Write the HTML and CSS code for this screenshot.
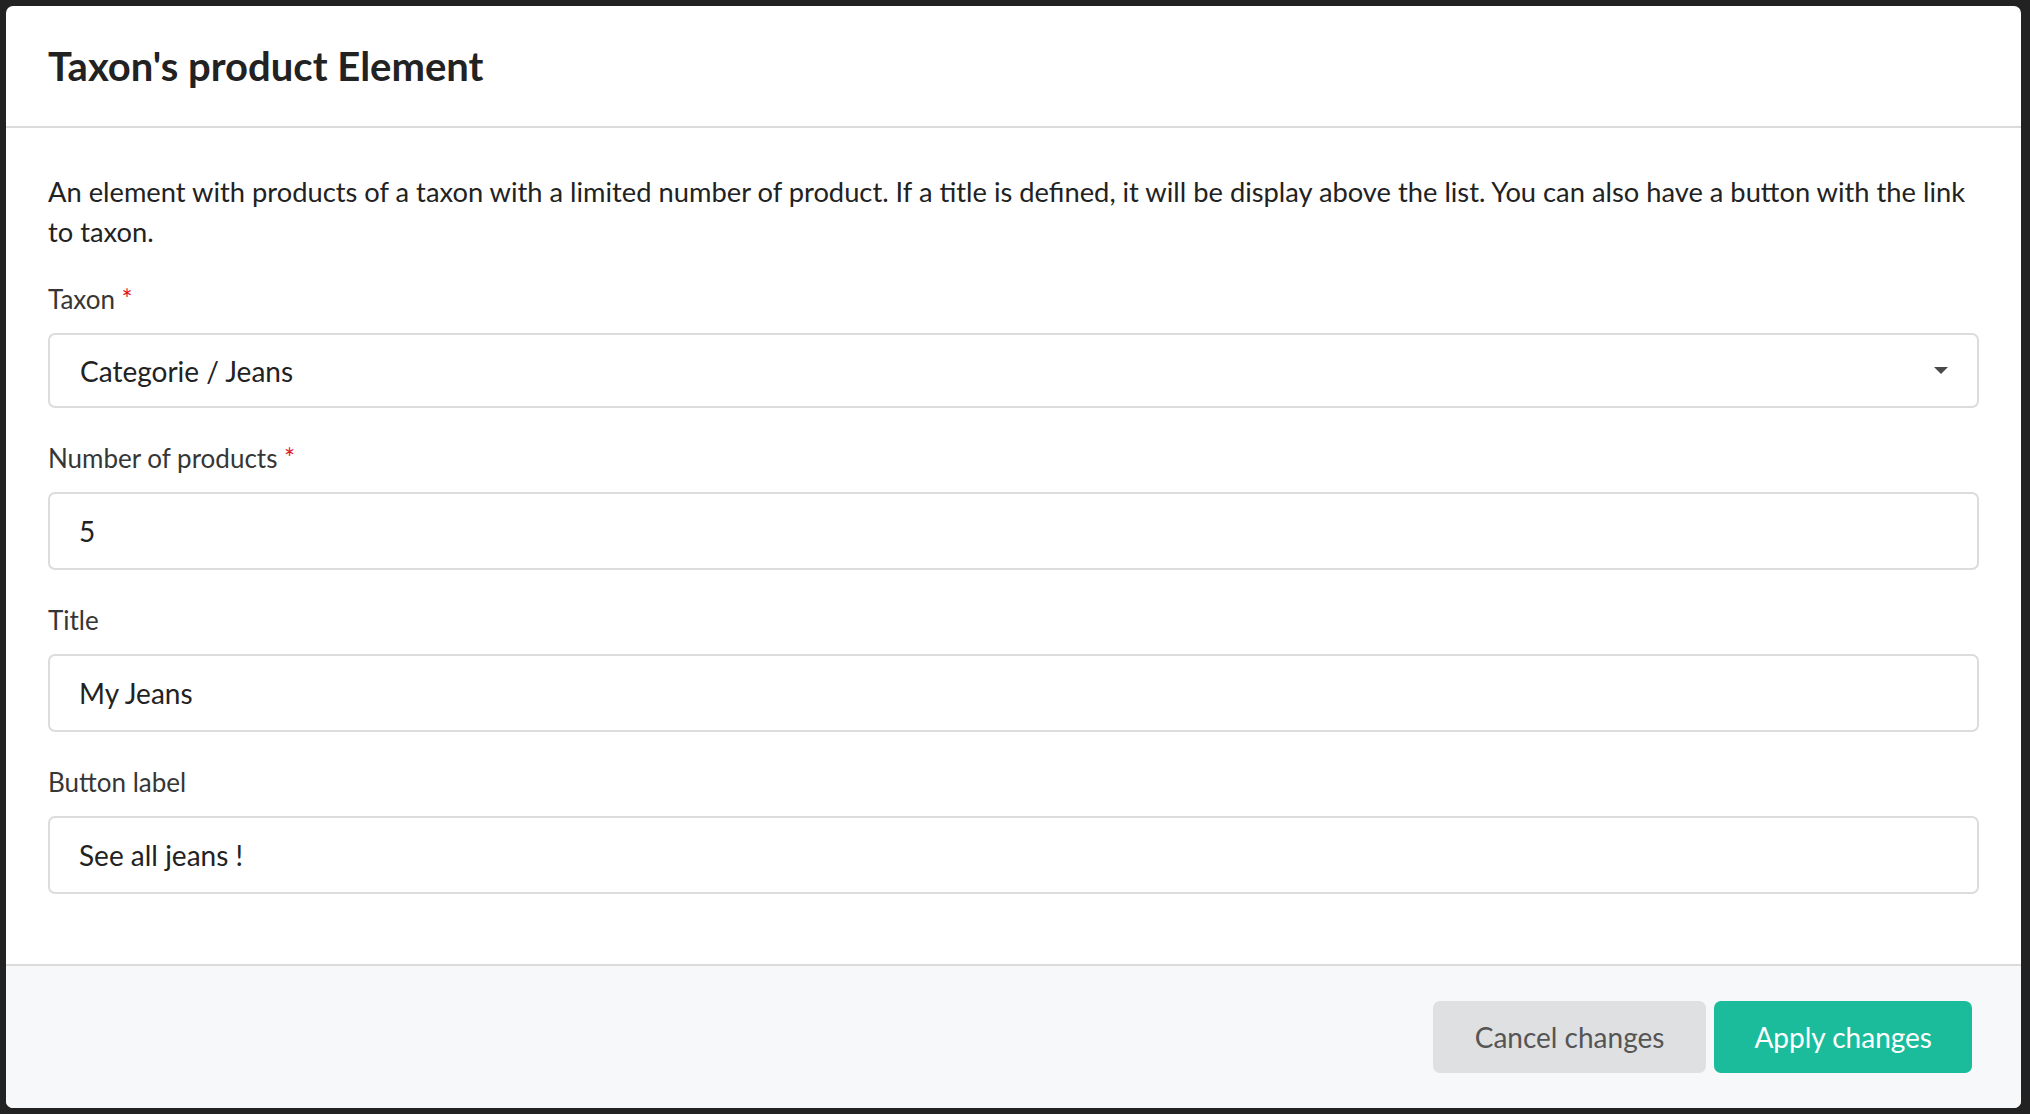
FILE: index.html
```html
<!DOCTYPE html>
<html lang="en">
<head>
<meta charset="utf-8">
<title>Taxon's product Element</title>
<link rel="stylesheet" href="styles.css">
</head>
<body>
<div class="page">
  <div class="modal">
    <header class="modal-head">
      <h1 class="modal-title">Taxon's product Element</h1>
    </header>
    <section class="modal-body">
      <p class="description">An element with products of a taxon with a limited number of product. If a title is defined, it will be display above the list. You can also have a button with the link to taxon.</p>
      <div class="field">
        <label class="label">Taxon <span class="required">*</span></label>
        <div class="select">
          <span class="value">Categorie / Jeans</span>
          <span class="arrow"></span>
        </div>
      </div>
      <div class="field">
        <label class="label">Number of products <span class="required">*</span></label>
        <div class="input">5</div>
      </div>
      <div class="field">
        <label class="label">Title</label>
        <div class="input">My Jeans</div>
      </div>
      <div class="field">
        <label class="label">Button label</label>
        <div class="input">See all jeans !</div>
      </div>
    </section>
    <footer class="modal-foot">
      <button class="button button-cancel">Cancel changes</button>
      <button class="button button-apply">Apply changes</button>
    </footer>
  </div>
</div>
</body>
</html>
```

FILE: styles.css
```css
html, body {
  margin: 0;
  padding: 0;
  background: #222222;
}
body {
  font-family: Lato, "Open Sans", "Liberation Sans", sans-serif;
  color: #222222;
}
.page {
  padding: 6px 9px 6px 6px;
}
.modal {
  width: 2015px;
  height: 1102px;
  background: #ffffff;
  border-radius: 7px;
  display: flex;
  flex-direction: column;
  overflow: hidden;
}
.modal-head {
  height: 120px;
  border-bottom: 2px solid #dbdbdb;
  display: flex;
  align-items: center;
  padding: 0 42px;
}
.modal-title {
  margin: 0;
  font-size: 40px;
  font-weight: 700;
  color: #222222;
  line-height: 1.2;
}
.modal-body {
  flex: 1;
  padding: 44px 42px 0 42px;
}
.description {
  margin: 0 0 29px 0;
  font-size: 27.3px;
  line-height: 40px;
  color: #222222;
}
.field {
  margin-bottom: 32px;
}
.label {
  display: block;
  font-size: 26px;
  line-height: 36px;
  color: #363636;
  margin-bottom: 16px;
}
.required {
  color: #e0161e;
}
.select, .input {
  box-sizing: border-box;
  border: 2px solid #dcdcdc;
  border-radius: 7px;
  background: #ffffff;
  display: flex;
  align-items: center;
  font-size: 28px;
  color: #222222;
}
.select {
  height: 75px;
  padding: 0 29px 0 30px;
  justify-content: space-between;
}
.input {
  height: 78px;
  padding: 0 29px;
}
.arrow {
  width: 0;
  height: 0;
  border-left: 7px solid transparent;
  border-right: 7px solid transparent;
  border-top: 7px solid #4a4a4a;
}
.modal-foot {
  height: 142px;
  border-top: 2px solid #dbdbdb;
  background: #f7f8fa;
  display: flex;
  align-items: center;
  justify-content: flex-end;
  gap: 8px;
  padding: 0 49px 0 42px;
}
.button {
  height: 72px;
  border: none;
  border-radius: 7px;
  font-family: Lato, "Open Sans", "Liberation Sans", sans-serif;
  font-size: 28px;
  padding: 0 42px;
  cursor: pointer;
}
.button-cancel {
  background: #dfe0e2;
  color: #555555;
}
.button-apply {
  background: #1bbc9b;
  color: #ffffff;
  padding: 0 40px;
}
```
